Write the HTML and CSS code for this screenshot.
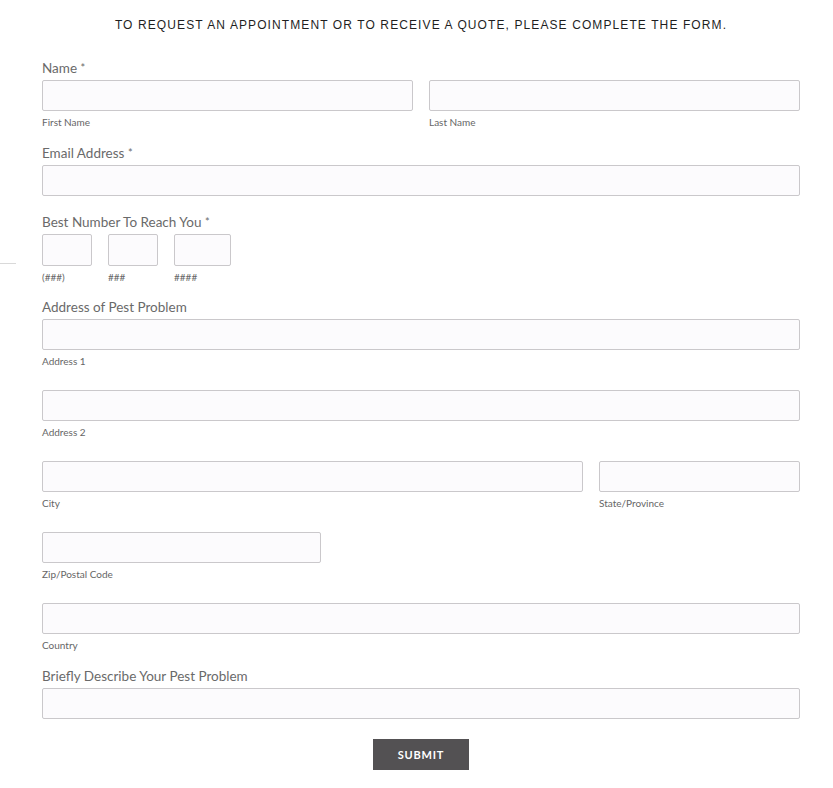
FILE: index.html
```html
<!DOCTYPE html>
<html lang="en">
<head>
  <meta charset="UTF-8" />
  <meta name="viewport" content="width=device-width, initial-scale=1.0"/>
  <title>Request an Appointment</title>
  <link rel="stylesheet" href="styles.css">
</head>
<body>
  <div class="container">
    <h2 class="intro">To request an appointment or to receive a quote, please complete the form.</h2>

    <form id="quoteForm">
      <div class="field">
        <label class="title">Name <span class="req">*</span></label>
        <div class="row">
          <div class="part grow">
            <input type="text" />
            <span class="sub">First Name</span>
          </div>
          <div class="part grow">
            <input type="text" />
            <span class="sub">Last Name</span>
          </div>
        </div>
      </div>

      <div class="field no-sub">
        <label class="title">Email Address <span class="req">*</span></label>
        <input type="email" />
      </div>

      <div class="field phone">
        <label class="title">Best Number To Reach You <span class="req">*</span></label>
        <div class="row">
          <div class="part area">
            <input type="text" maxlength="3" />
            <span class="sub">(###)</span>
          </div>
          <div class="part area">
            <input type="text" maxlength="3" />
            <span class="sub">###</span>
          </div>
          <div class="part line">
            <input type="text" maxlength="4" />
            <span class="sub">####</span>
          </div>
        </div>
      </div>

      <div class="field">
        <label class="title">Address of Pest Problem</label>
        <div class="part addr">
          <input type="text" />
          <span class="sub">Address 1</span>
        </div>
        <div class="part addr">
          <input type="text" />
          <span class="sub">Address 2</span>
        </div>
        <div class="row addr">
          <div class="part city">
            <input type="text" />
            <span class="sub">City</span>
          </div>
          <div class="part state">
            <input type="text" />
            <span class="sub">State/Province</span>
          </div>
        </div>
        <div class="part addr zip">
          <input type="text" />
          <span class="sub">Zip/Postal Code</span>
        </div>
        <div class="part">
          <input type="text" />
          <span class="sub">Country</span>
        </div>
      </div>

      <div class="field no-sub">
        <label class="title">Briefly Describe Your Pest Problem</label>
        <input type="text" />
      </div>

      <div class="actions">
        <button type="submit">Submit</button>
      </div>
    </form>
  </div>
</body>
</html>
```

FILE: styles.css
```css
body {
  margin: 0;
  background: #fff;
  font-family: "Lato", "Liberation Sans", sans-serif;
  color: #6a6a6a;
}

.container {
  width: 758px;
  padding: 15px 0 0 42px;
}

.intro {
  margin: 0 0 25px;
  font-family: "Liberation Sans", Arial, sans-serif;
  font-size: 12px;
  font-weight: normal;
  line-height: 20px;
  letter-spacing: 1.1px;
  text-transform: uppercase;
  text-align: center;
  color: #1f1f1f;
}

.field {
  position: relative;
  margin-bottom: 16px;
}

.field.no-sub {
  margin-bottom: 18px;
}

.field.phone {
  margin-bottom: 15px;
}

.title {
  display: block;
  font-size: 13.5px;
  line-height: 16px;
  margin-bottom: 4px;
}

.req {
  font-size: 11px;
  vertical-align: top;
}

.row {
  display: flex;
  gap: 16px;
}

.part {
  display: flex;
  flex-direction: column;
}

.grow {
  flex: 1;
}

.addr {
  margin-bottom: 22px;
}

.city {
  flex: 1;
}

.state {
  width: 201px;
}

.zip {
  width: 279px;
}

.area {
  width: 50px;
}

.line {
  width: 57px;
}

/* small rule at the page edge beside the phone row */
.phone::before {
  content: "";
  position: absolute;
  left: -42px;
  top: 49px;
  width: 16px;
  border-top: 1px solid #d9d9d9;
}

input {
  display: block;
  width: 100%;
  height: 31px;
  box-sizing: border-box;
  margin: 0;
  padding: 6px 8px;
  background: #fcfbfd;
  border: 1px solid #cac8cb;
  border-radius: 2px;
  font-family: inherit;
  font-size: 13px;
}

.phone input {
  height: 32px;
}

.sub {
  display: block;
  margin-top: 5px;
  font-size: 10px;
  line-height: 13px;
  color: #666;
}

.actions {
  display: flex;
  justify-content: center;
  padding-top: 2px;
}

button {
  width: 96px;
  height: 31px;
  background: #535153;
  color: #fff;
  border: none;
  font-family: "Lato", "Liberation Sans", sans-serif;
  font-weight: bold;
  font-size: 11px;
  letter-spacing: 0.8px;
  text-transform: uppercase;
  cursor: pointer;
}
```
